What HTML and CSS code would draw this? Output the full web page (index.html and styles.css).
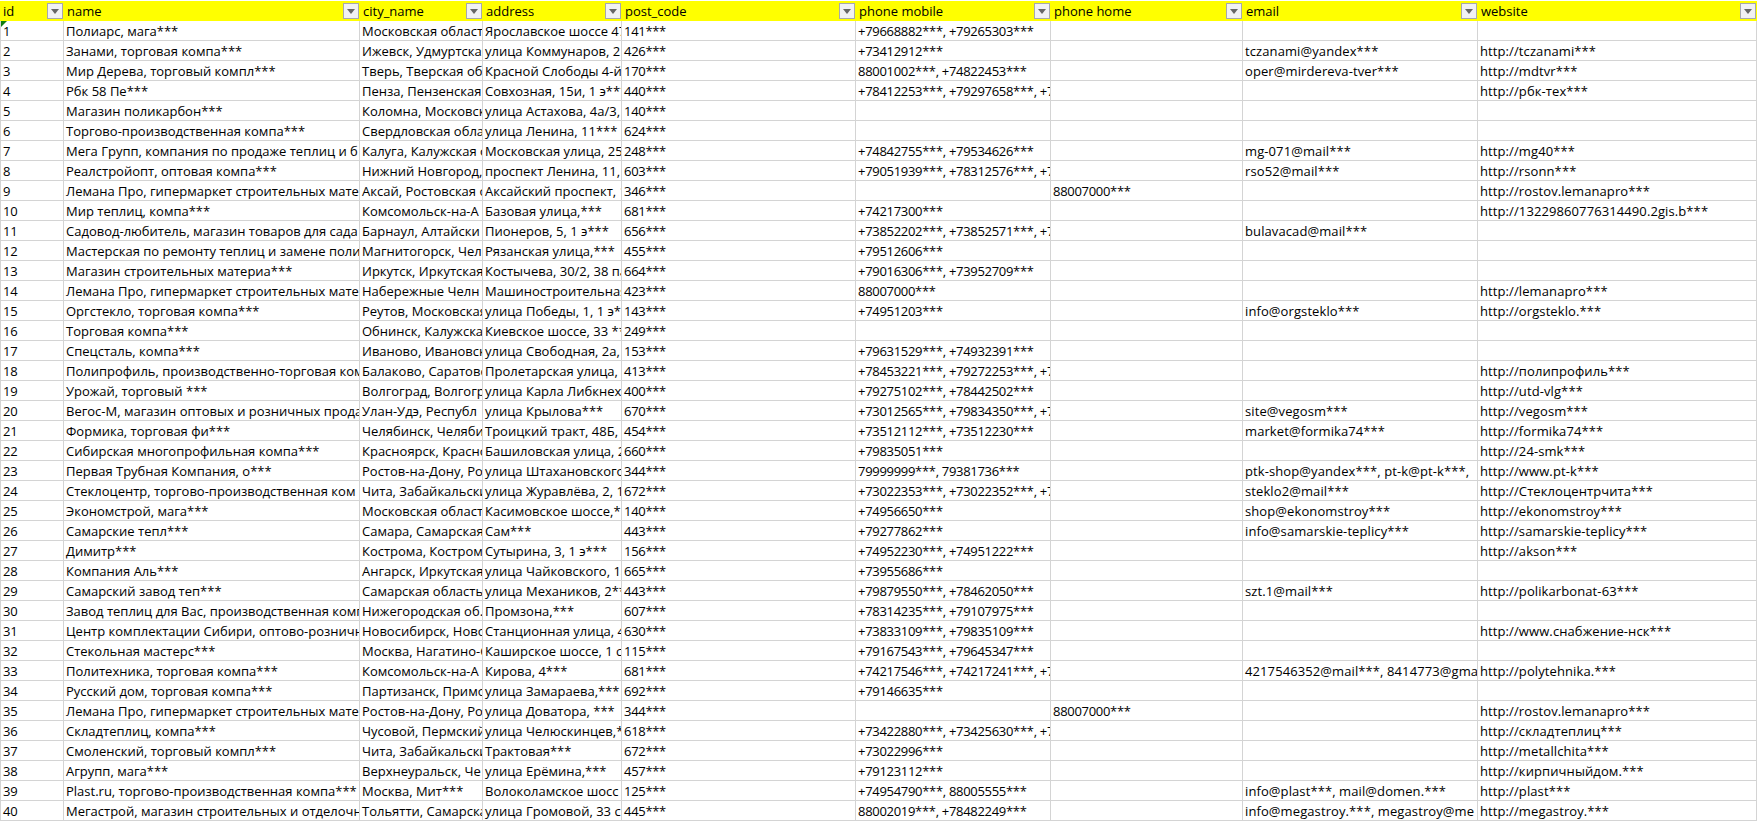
FILE: index.html
```html
<!DOCTYPE html>
<html lang="ru">
<head>
<meta charset="utf-8">
<title>Таблица</title>
<link rel="stylesheet" href="styles.css">
</head>
<body>
<table class="sheet">
<colgroup><col class="c-id"><col class="c-name"><col class="c-city"><col class="c-addr"><col class="c-post"><col class="c-mob"><col class="c-home"><col class="c-mail"><col class="c-web"></colgroup>
<thead><tr id="head"></tr></thead>
<tbody id="rows"></tbody>
</table>
<span class="marker"></span>
<script src="data.js"></script>
</body>
</html>
```
FILE: data.js
```js
var heads = ["id","name","city_name","address","post_code","phone mobile","phone home","email","website"];
var kinds = ["num","","","","num","num","num","lat","lat"];
var data = [
["Полиарс, мага***","Московская область","Ярославское шоссе 47","141***","+79668882***, +79265303***","","",""],
["Занами, торговая компа***","Ижевск, Удмуртская","улица Коммунаров, 2","426***","+73412912***","","tczanami@yandex***","http://tczanami***"],
["Мир Дерева, торговый компл***","Тверь, Тверская об","Красной Слободы 4-й","170***","88001002***, +74822453***","","oper@mirdereva-tver***","http://mdtvr***"],
["Рбк 58 Пе***","Пенза, Пензенская","Совхозная, 15и, 1 э***","440***","+78412253***, +79297658***, +7","","","http://рбк-тех***"],
["Магазин поликарбон***","Коломна, Московская","улица Астахова, 4а/3,","140***","","","",""],
["Торгово-производственная компа***","Свердловская область","улица Ленина, 11***","624***","","","",""],
["Мега Групп, компания по продаже теплиц и б","Калуга, Калужская о","Московская улица, 25","248***","+74842755***, +79534626***","","mg-071@mail***","http://mg40***"],
["Реалстройопт, оптовая компа***","Нижний Новгород,","проспект Ленина, 11,","603***","+79051939***, +78312576***, +7","","rso52@mail***","http://rsonn***"],
["Лемана Про, гипермаркет строительных мате","Аксай, Ростовская о","Аксайский проспект, 1","346***","","88007000***","","http://rostov.lemanapro***"],
["Мир теплиц, компа***","Комсомольск-на-А","Базовая улица,***","681***","+74217300***","","","http://13229860776314490.2gis.b***"],
["Садовод-любитель, магазин товаров для сада","Барнаул, Алтайски","Пионеров, 5, 1 э***","656***","+73852202***, +73852571***, +7","","bulavacad@mail***",""],
["Мастерская по ремонту теплиц и замене поли","Магнитогорск, Чел","Рязанская улица,***","455***","+79512606***","","",""],
["Магазин строительных материа***","Иркутск, Иркутская","Костычева, 30/2, 38 па","664***","+79016306***, +73952709***","","",""],
["Лемана Про, гипермаркет строительных мате","Набережные Челн","Машиностроительная","423***","88007000***","","","http://lemanapro***"],
["Оргстекло, торговая компа***","Реутов, Московская","улица Победы, 1, 1 э***","143***","+74951203***","","info@orgsteklo***","http://orgsteklo.***"],
["Торговая компа***","Обнинск, Калужская","Киевское шоссе, 33 ***","249***","","","",""],
["Спецсталь, компа***","Иваново, Ивановская","улица Свободная, 2а,","153***","+79631529***, +74932391***","","",""],
["Полипрофиль, производственно-торговая ком","Балаково, Саратовская","Пролетарская улица,","413***","+78453221***, +79272253***, +7","","","http://полипрофиль***"],
["Урожай, торговый ***","Волгоград, Волгогр","улица Карла Либкнех","400***","+79275102***, +78442502***","","","http://utd-vlg***"],
["Вегос-М, магазин оптовых и розничных прода","Улан-Удэ, Республ","улица Крылова***","670***","+73012565***, +79834350***, +7","","site@vegosm***","http://vegosm***"],
["Формика, торговая фи***","Челябинск, Челяби","Троицкий тракт, 48Б,","454***","+73512112***, +73512230***","","market@formika74***","http://formika74***"],
["Сибирская многопрофильная компа***","Красноярск, Красноярский","Башиловская улица, 2","660***","+79835051***","","","http://24-smk***"],
["Первая Трубная Компания, о***","Ростов-на-Дону, Ростов","улица Штахановского","344***","79999999***, 79381736***","","ptk-shop@yandex***, pt-k@pt-k***,","http://www.pt-k***"],
["Стеклоцентр, торгово-производственная ком","Чита, Забайкальски","улица Журавлёва, 2, 1","672***","+73022353***, +73022352***, +7","","steklo2@mail***","http://Стеклоцентрчита***"],
["Экономстрой, мага***","Московская област","Касимовское шоссе,*","140***","+74956650***","","shop@ekonomstroy***","http://ekonomstroy***"],
["Самарские тепл***","Самара, Самарская","Сам***","443***","+79277862***","","info@samarskie-teplicy***","http://samarskie-teplicy***"],
["Димитр***","Кострома, Костромская","Сутырина, 3, 1 э***","156***","+74952230***, +74951222***","","","http://akson***"],
["Компания Аль***","Ангарск, Иркутская","улица Чайковского, 1а","665***","+73955686***","","",""],
["Самарский завод теп***","Самарская область","улица Механиков, 2***","443***","+79879550***, +78462050***","","szt.1@mail***","http://polikarbonat-63***"],
["Завод теплиц для Вас, производственная комп","Нижегородская об.","Промзона,***","607***","+78314235***, +79107975***","","",""],
["Центр комплектации Сибири, оптово-розничная","Новосибирск, Новосибирская","Станционная улица, 4","630***","+73833109***, +79835109***","","","http://www.снабжение-нск***"],
["Стекольная мастерс***","Москва, Нагатино-Садовники","Каширское шоссе, 1 с","115***","+79167543***, +79645347***","","",""],
["Политехника, торговая компа***","Комсомольск-на-А","Кирова, 4***","681***","+74217546***, +74217241***, +7","","4217546352@mail***, 8414773@gmail","http://polytehnika.***"],
["Русский дом, торговая компа***","Партизанск, Приморский","улица Замараева,***","692***","+79146635***","","",""],
["Лемана Про, гипермаркет строительных мате","Ростов-на-Дону, Ростов","улица Доватора, ***","344***","","88007000***","","http://rostov.lemanapro***"],
["Складтеплиц, компа***","Чусовой, Пермский","улица Челюскинцев,*","618***","+73422880***, +73425630***, +7","","","http://складтеплиц***"],
["Смоленский, торговый компл***","Чита, Забайкальски","Трактовая***","672***","+73022996***","","","http://metallchita***"],
["Агрупп, мага***","Верхнеуральск, Че","улица Ерёмина,***","457***","+79123112***","","","http://кирпичныйдом.***"],
["Plast.ru, торгово-производственная компа***","Москва, Мит***","Волоколамское шосс","125***","+74954790***, 88005555***","","info@plast***, mail@domen.***","http://plast***"],
["Мегастрой, магазин строительных и отделочн","Тольятти, Самарская","улица Громовой, 33 с","445***","88002019***, +78482249***","","info@megastroy.***, megastroy@me","http://megastroy.***"]
];
document.getElementById("head").innerHTML = heads.map(function (h) {
  return '<th><div class="hcell"><span class="htext">' + h + '</span><span class="filter"><svg viewBox="0 0 8 5" width="8" height="5"><path d="M0 0H8L4 5Z"/></svg></span></div></th>';
}).join("");
document.getElementById("rows").innerHTML = data.map(function (r, i) {
  return "<tr>" + [String(i + 1)].concat(r).map(function (c, j) {
    return '<td class="' + kinds[j] + '">' + c + "</td>";
  }).join("") + "</tr>";
}).join("");
```
FILE: styles.css
```css
html, body {
  margin: 0;
  padding: 0;
  background: #fff;
  overflow: hidden;
}
body {
  position: relative;
  font-family: "Open Sans", "Noto Sans", sans-serif;
  font-size: 13px;
  color: #000;
}
.sheet {
  border-collapse: separate;
  border-spacing: 0;
  table-layout: fixed;
  width: 1757px;
  margin: 1px 0 0;
}
.c-id { width: 64px; }
.c-name { width: 296px; }
.c-city { width: 123px; }
.c-addr { width: 139px; }
.c-post { width: 234px; }
.c-mob { width: 195px; }
.c-home { width: 192px; }
.c-mail { width: 235px; }
.c-web { width: 279px; }
th {
  height: 20px;
  padding: 0;
  background: #ffff00;
  font-weight: 400;
  text-align: left;
}
.hcell {
  display: flex;
  align-items: center;
  justify-content: space-between;
  height: 20px;
  padding: 0 1px 0 3px;
}
.htext {
  white-space: nowrap;
  overflow: hidden;
}
.filter {
  flex: none;
  display: flex;
  align-items: center;
  justify-content: center;
  box-sizing: border-box;
  width: 16px;
  height: 16px;
  background: #f1f1f3;
  border: 1px solid #a6a8ad;
}
.filter svg { fill: #666; }
td {
  height: 18px;
  padding: 1px 0 0 2px;
  border-right: 1px solid #d4d4d4;
  border-bottom: 1px solid #d4d4d4;
  white-space: nowrap;
  overflow: hidden;
  line-height: 18px;
}
td:first-child {
  padding-left: 2px;
  border-left: 1px solid #d4d4d4;
}
.num { letter-spacing: -0.3px; }
.lat { letter-spacing: 0.1px; }
.marker {
  position: absolute;
  left: 1px;
  top: 21px;
  width: 0;
  height: 0;
  border-top: 6px solid #107c10;
  border-right: 6px solid transparent;
}
```
